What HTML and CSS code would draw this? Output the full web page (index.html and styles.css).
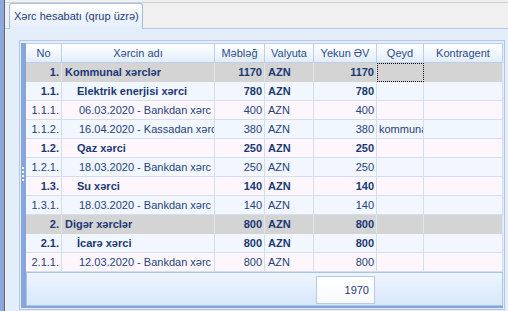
FILE: index.html
```html
<!DOCTYPE html>
<html>
<head>
<meta charset="utf-8">
<link rel="stylesheet" href="styles.css">
</head>
<body>
<div class="app">
  <div class="edge"></div>
  <div class="edge-line"></div>
  <div class="main">
    <div class="tabbar">
      <div class="tab">Xərc hesabatı (qrup üzrə)</div>
    </div>
    <div class="panel">
      <div class="gridwrap">
        <div class="gridframe">
          <div class="grip"></div>
          <table class="grid">
            <colgroup>
              <col class="c-no"><col class="c-name"><col class="c-amt"><col class="c-cur"><col class="c-tot"><col class="c-note"><col class="c-ctr">
            </colgroup>
            <thead>
              <tr><th>No</th><th>Xərcin adı</th><th>Məbləğ</th><th>Valyuta</th><th>Yekun ƏV</th><th>Qeyd</th><th>Kontragent</th></tr>
            </thead>
            <tbody>
              <tr class="group bold"><td class="num">1.</td><td class="l1">Kommunal xərclər</td><td class="num">1170</td><td class="cur">AZN</td><td class="num">1170</td><td class="focus"></td><td></td></tr>
              <tr class="blue bold"><td class="num">1.1.</td><td class="l2">Elektrik enerjisi xərci</td><td class="num">780</td><td class="cur">AZN</td><td class="num">780</td><td></td><td></td></tr>
              <tr class="pink"><td class="num">1.1.1.</td><td class="l3">06.03.2020 - Bankdan xərc</td><td class="num">400</td><td class="cur">AZN</td><td class="num">400</td><td></td><td></td></tr>
              <tr class="blue"><td class="num">1.1.2.</td><td class="l3">16.04.2020 - Kassadan xərc</td><td class="num">380</td><td class="cur">AZN</td><td class="num">380</td><td class="note">kommunal</td><td></td></tr>
              <tr class="pink bold"><td class="num">1.2.</td><td class="l2">Qaz xərci</td><td class="num">250</td><td class="cur">AZN</td><td class="num">250</td><td></td><td></td></tr>
              <tr class="blue"><td class="num">1.2.1.</td><td class="l3">18.03.2020 - Bankdan xərc</td><td class="num">250</td><td class="cur">AZN</td><td class="num">250</td><td></td><td></td></tr>
              <tr class="pink bold"><td class="num">1.3.</td><td class="l2">Su xərci</td><td class="num">140</td><td class="cur">AZN</td><td class="num">140</td><td></td><td></td></tr>
              <tr class="blue"><td class="num">1.3.1.</td><td class="l3">18.03.2020 - Bankdan xərc</td><td class="num">140</td><td class="cur">AZN</td><td class="num">140</td><td></td><td></td></tr>
              <tr class="group bold"><td class="num">2.</td><td class="l1">Digər xərclər</td><td class="num">800</td><td class="cur">AZN</td><td class="num">800</td><td></td><td></td></tr>
              <tr class="blue bold"><td class="num">2.1.</td><td class="l2">İcarə xərci</td><td class="num">800</td><td class="cur">AZN</td><td class="num">800</td><td></td><td></td></tr>
              <tr class="pink"><td class="num">2.1.1.</td><td class="l3">12.03.2020 - Bankdan xərc</td><td class="num">800</td><td class="cur">AZN</td><td class="num">800</td><td></td><td></td></tr>
            </tbody>
          </table>
          <div class="footer">
            <div class="total">1970</div>
          </div>
        </div>
      </div>
    </div>
  </div>
</div>
</body>
</html>
```

FILE: styles.css
```css
html, body {
  margin: 0;
  padding: 0;
}
body {
  width: 508px;
  height: 311px;
  overflow: hidden;
  background: #f0f0f0;
  font-family: "Liberation Sans", Arial, sans-serif;
  font-size: 11px;
  color: #1f3d7a;
}
.app {
  display: flex;
  height: 311px;
}
.edge {
  width: 4px;
  background: #8ea8dc;
}
.edge-line {
  width: 1px;
  background: #56657e;
}
.main {
  flex: 1;
  display: flex;
  flex-direction: column;
  min-width: 0;
}
.tabbar {
  margin-top: 2px;
  border-top: 1px solid #d2d2d2;
  border-bottom: 1px solid #b3c9e8;
  height: 25px;
  padding-left: 4px;
  display: flex;
  align-items: flex-end;
  background: #f0f0f0;
}
.tab {
  box-sizing: border-box;
  height: 26px;
  margin-bottom: -1px;
  padding: 5px 3px 0 4px;
  border: 1px solid #a3bce2;
  border-bottom: none;
  border-radius: 3px 3px 0 0;
  background: linear-gradient(#ffffff, #edf3fc 60%, #e4eefb);
  color: #1f3d7a;
  line-height: 14px;
  white-space: nowrap;
}
.panel {
  flex: 1;
  background: #e4eefb;
  border-left: 1px solid #f5f8fd;
  padding: 11px 3px 1px 13px;
}
.gridwrap {
  box-sizing: border-box;
  height: 270px;
  border: 1px solid #b3c7e6;
  padding: 2px 1px 0 1px;
}
.gridframe {
  position: relative;
  border-left: 5px solid #86a5da;
  border-bottom: 2px solid #86a5da;
  height: 265px;
  box-sizing: border-box;
}
.grip {
  position: absolute;
  left: -4px;
  top: 124px;
  width: 2px;
  height: 16px;
  background: repeating-linear-gradient(#ffffff 0 2px, transparent 2px 4px);
}
.grid {
  border-collapse: separate;
  border-spacing: 0;
  table-layout: fixed;
  width: 477px;
}
.c-no { width: 36px; }
.c-name { width: 153px; }
.c-amt { width: 50px; }
.c-cur { width: 49px; }
.c-tot { width: 63px; }
.c-note { width: 47px; }
.c-ctr { width: 79px; }
.grid th {
  font-weight: normal;
  color: #2a4c8c;
  height: 18px;
  line-height: 18px;
  padding: 0;
  text-align: center;
  background: linear-gradient(#ffffff, #f2f7fe 50%, #e1ecfa);
  border-top: 1px solid #bccfe9;
  border-bottom: 1px solid #bccfe9;
  border-right: 1px solid #bccfe9;
  white-space: nowrap;
  overflow: hidden;
}
.grid td {
  height: 18px;
  line-height: 18px;
  padding: 0 3px;
  border-right: 1px solid #d2dff0;
  border-bottom: 1px solid #d2dff0;
  white-space: nowrap;
  overflow: hidden;
  color: #253f7c;
}
.grid td.num {
  text-align: right;
  padding-right: 2px;
}
.grid td.cur {
  padding-left: 3px;
}
.grid td.l1 { padding-left: 3px; }
.grid td.l2 { padding-left: 15px; }
.grid td.l3 { padding-left: 17px; text-overflow: clip; }
.grid td.note { padding-left: 2px; }
.bold td {
  font-weight: bold;
  color: #1b3874;
}
.group td {
  background: #d4d4d4;
  border-bottom-color: #d4d4d4;
  border-right-color: #dfe6f0;
}
.blue td {
  background: #f2f7ff;
}
.pink td {
  background: #fdf7fd;
}
.grid td.focus {
  outline: 1px dotted #000000;
  outline-offset: -1px;
}
.footer {
  box-sizing: border-box;
  width: 477px;
  height: 34px;
  border: 1px solid #a9c4e8;
  background: linear-gradient(#edf5ff, #d8e7fa);
  padding-top: 3px;
  padding-left: 289px;
}
.total {
  box-sizing: border-box;
  width: 59px;
  height: 28px;
  border: 1px solid #b6c9e5;
  background: linear-gradient(#ffffff, #f7f9fc);
  text-align: right;
  padding-right: 5px;
  line-height: 26px;
  color: #1f3d7a;
}
```
